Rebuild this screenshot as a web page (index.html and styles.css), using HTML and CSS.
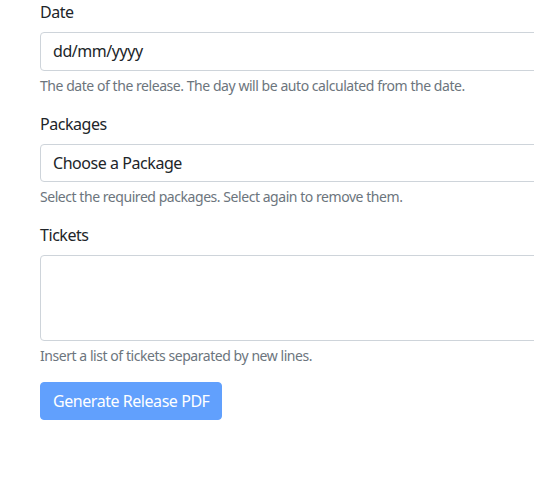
FILE: index.html
```html
<!DOCTYPE html>
<html lang="en">
<head>
<meta charset="utf-8">
<title>Release</title>
<link rel="stylesheet" href="styles.css">
</head>
<body>
<form class="release-form">
  <div class="form-group">
    <label class="form-label" for="date">Date</label>
    <div class="form-control date-control" id="date">dd/mm/yyyy</div>
    <div class="form-text">The date of the release. The day will be auto calculated from the date.</div>
  </div>
  <div class="form-group">
    <label class="form-label" for="pkg">Packages</label>
    <div class="form-control" id="pkg">Choose a Package</div>
    <div class="form-text">Select the required packages. Select again to remove them.</div>
  </div>
  <div class="form-group">
    <label class="form-label" for="tickets">Tickets</label>
    <textarea class="form-control textarea" id="tickets" rows="3"></textarea>
    <div class="form-text">Insert a list of tickets separated by new lines.</div>
  </div>
  <button type="button" class="btn-primary" disabled>Generate Release PDF</button>
</form>
</body>
</html>
```
FILE: styles.css
```css
html, body {
  margin: 0;
  padding: 0;
  overflow: hidden;
  background: #fff;
}
body {
  font-family: "Noto Sans", "Open Sans", sans-serif;
  font-size: 16px;
  line-height: 1.5;
  letter-spacing: -0.028em;
  color: #212529;
}
.release-form {
  padding-left: 40px;
  width: 560px;
}
.form-group {
  margin-bottom: 16px;
}
.form-label {
  display: block;
  margin-bottom: 8px;
}
.form-control {
  display: block;
  box-sizing: border-box;
  width: 100%;
  height: 38px;
  padding: 6px 12px;
  font: inherit;
  letter-spacing: inherit;
  color: #212529;
  border: 1px solid #ced4da;
  border-radius: 4px;
  background: #fff;
}
.date-control {
  height: 39px;
}
.textarea {
  height: 86px;
  resize: none;
  margin: 0;
}
.form-text {
  margin-top: 4px;
  font-size: 14px;
  line-height: 21px;
  color: #6c757d;
}
.btn-primary {
  display: inline-block;
  font: inherit;
  letter-spacing: inherit;
  color: #fff;
  background: #0d6efd;
  border: 1px solid #0d6efd;
  border-radius: 4px;
  padding: 6px 12px;
  opacity: .65;
}
```
